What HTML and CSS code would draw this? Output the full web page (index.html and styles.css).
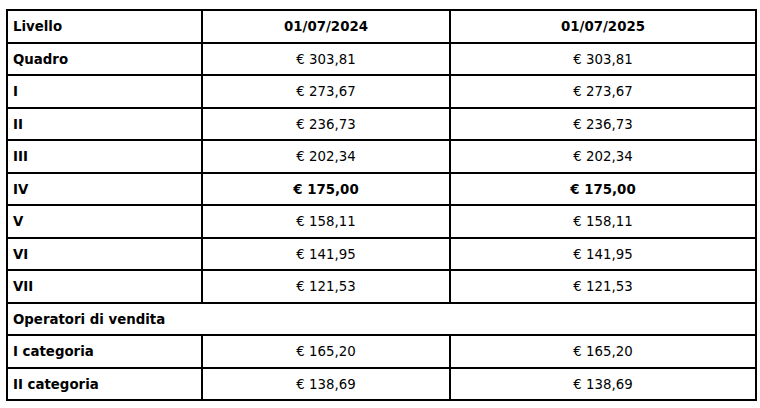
FILE: index.html
```html
<!DOCTYPE html>
<html lang="it">
<head>
<meta charset="utf-8">
<title>Minimi retributivi</title>
<link rel="stylesheet" href="styles.css">
</head>
<body>
<table class="pay">
  <colgroup>
    <col class="c-level">
    <col class="c-date">
    <col class="c-date2">
  </colgroup>
  <thead>
    <tr><th class="lvl">Livello</th><th>01/07/2024</th><th>01/07/2025</th></tr>
  </thead>
  <tbody>
    <tr><td class="lvl">Quadro</td><td>€ 303,81</td><td>€ 303,81</td></tr>
    <tr><td class="lvl">I</td><td>€ 273,67</td><td>€ 273,67</td></tr>
    <tr><td class="lvl">II</td><td>€ 236,73</td><td>€ 236,73</td></tr>
    <tr><td class="lvl">III</td><td>€ 202,34</td><td>€ 202,34</td></tr>
    <tr class="hl"><td class="lvl">IV</td><td>€ 175,00</td><td>€ 175,00</td></tr>
    <tr><td class="lvl">V</td><td>€ 158,11</td><td>€ 158,11</td></tr>
    <tr><td class="lvl">VI</td><td>€ 141,95</td><td>€ 141,95</td></tr>
    <tr><td class="lvl">VII</td><td>€ 121,53</td><td>€ 121,53</td></tr>
    <tr><td class="lvl" colspan="3">Operatori di vendita</td></tr>
    <tr><td class="lvl">I categoria</td><td>€ 165,20</td><td>€ 165,20</td></tr>
    <tr><td class="lvl">II categoria</td><td>€ 138,69</td><td>€ 138,69</td></tr>
  </tbody>
</table>
</body>
</html>
```
FILE: styles.css
```css
html, body {
  margin: 0;
  padding: 0;
  background: #fff;
}
body {
  padding: 9px 0 0 6px;
  font-family: "DejaVu Sans", Verdana, sans-serif;
  font-size: 13.33px;
  color: #000;
}
.pay {
  border-collapse: collapse;
  table-layout: fixed;
  width: 751px;
}
.c-level { width: 195px; }
.c-date { width: 248px; }
.pay th,
.pay td {
  border: 2px solid #000;
  height: 32.5px;
  padding: 2px 5px 0;
  box-sizing: border-box;
  text-align: center;
  vertical-align: middle;
  font-weight: normal;
  line-height: 16px;
}
.pay th {
  font-weight: bold;
}
.pay .lvl {
  text-align: left;
  font-weight: bold;
}
.pay .hl td {
  font-weight: bold;
}
```
